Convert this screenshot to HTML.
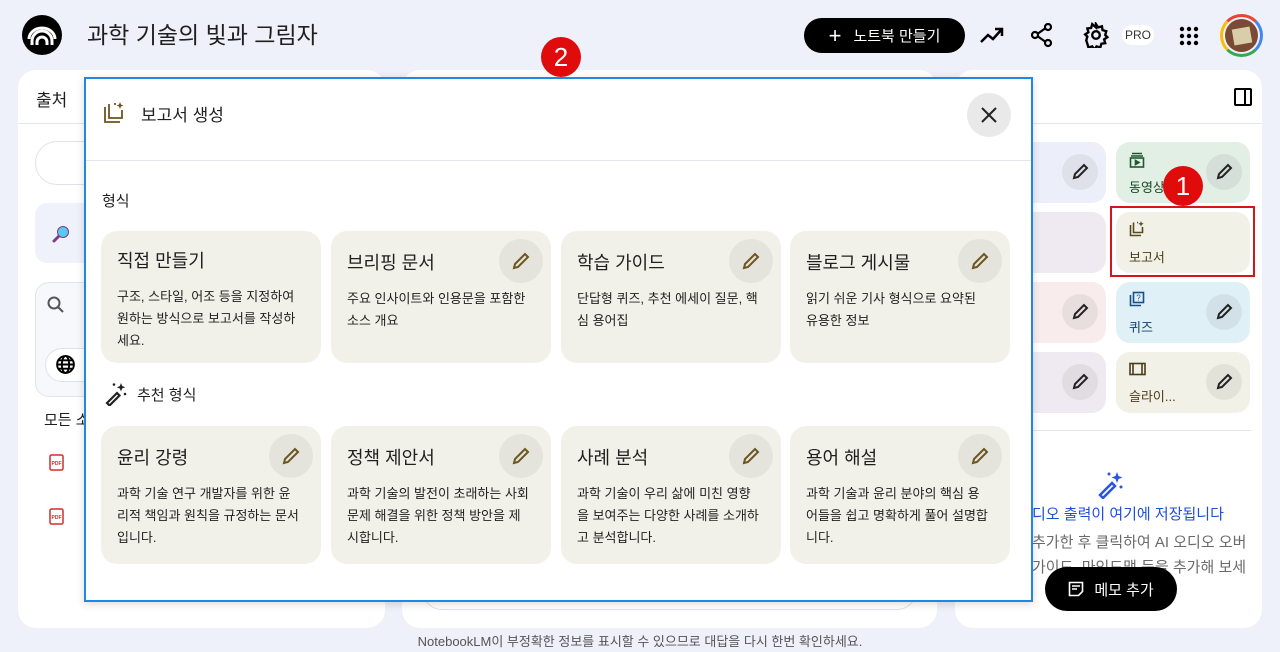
<!DOCTYPE html>
<html><head><meta charset="utf-8"><style>
*{box-sizing:border-box;margin:0;padding:0}
body{width:1280px;height:652px;overflow:hidden;background:#eef0fa;font-family:"Liberation Sans","Noto Sans CJK KR",sans-serif;color:#1f1f1f;position:relative}
.abs{position:absolute}
.panel{position:absolute;background:#fff;border-radius:18px}
.modal{position:absolute;left:84px;top:77px;width:949px;height:525px;background:#fff;border:2px solid #1e88e5;box-shadow:0 2px 8px rgba(0,0,0,.15)}
.card{position:absolute;width:220px;background:#f2f1e9;border-radius:16px;padding:16px 20px 16px 16px}
.card h3{font-size:18px;font-weight:400;margin-top:0;color:#1f1f1f}
.card p{font-size:13px;line-height:22px;margin-top:13px;color:#1f1f1f}
.pen{position:absolute;right:8px;top:8px;width:44px;height:44px;border-radius:50%;background:#e4e4dc;display:flex;align-items:center;justify-content:center}
.rc{position:absolute;width:134px;height:61px;border-radius:14px}
.rpen{position:absolute;right:8px;top:12px;width:36px;height:36px;border-radius:50%;background:rgba(0,0,0,.06);display:flex;align-items:center;justify-content:center}
.badge{position:absolute;width:40px;height:40px;border-radius:50%;background:#e00b0b;color:#fff;font-size:26px;display:flex;align-items:center;justify-content:center}
</style></head><body>
<!-- header -->
<div class="abs" style="left:22px;top:15px;width:40px;height:40px;border-radius:50%;background:#000">
<svg width="40" height="40" viewBox="0 0 40 40" fill="none" stroke="#fff" stroke-width="3"><path d="M10 30v-4a10 10 0 0 1 20 0v4"/><path d="M15 30v-3a5 5 0 0 1 10 0v3"/><path d="M7 24a13 11 0 0 1 26 0"/></svg></div>
<div class="abs" style="left:87px;top:16px;font-size:23px">과학 기술의 빛과 그림자</div>
<div class="abs" style="left:804px;top:18px;width:161px;height:35px;border-radius:18px;background:#000;color:#fff;font-size:15px;display:flex;align-items:center;justify-content:center;gap:12px"><span style="font-size:22px;line-height:1">+</span>노트북 만들기</div>
<svg class="abs" style="left:979px;top:24px" width="26" height="22" viewBox="0 0 26 22" fill="none" stroke="#000" stroke-width="2.5"><path d="M2 18l7-7 5 4 9-10M16 5h7v7"/></svg>
<svg class="abs" style="left:1030px;top:22px" width="24" height="26" viewBox="0 0 24 26" fill="none" stroke="#000" stroke-width="2.2"><circle cx="18" cy="5" r="3"/><circle cx="5" cy="13" r="3"/><circle cx="18" cy="21" r="3"/><path d="M8 11.5l7-5M8 14.5l7 5"/></svg>
<svg class="abs" style="left:1083px;top:22px" width="26" height="26" viewBox="0 0 24 24" fill="none" stroke="#000" stroke-width="2.2"><circle cx="12" cy="12" r="3.5"/><path d="M12 2l2 3 3.5-1 .5 3.5 3.5 1-1 3.5 2 2-3 2 1 3.5-3.5.5-1 3.5-3.5-1-2 3-2-3-3.5 1-1-3.5L3 17l1-3.5-2-2 3-2-1-3.5 3.5-.5 1-3.5L12 5z"/></svg>
<div class="abs" style="left:1122px;top:25px;width:32px;height:20px;border-radius:10px;background:#fff;font-size:12px;display:flex;align-items:center;justify-content:center;color:#333">PRO</div>
<svg class="abs" style="left:1179px;top:26px" width="20" height="20" viewBox="0 0 20 20" fill="#000"><circle cx="3" cy="3" r="2.2"/><circle cx="10" cy="3" r="2.2"/><circle cx="17" cy="3" r="2.2"/><circle cx="3" cy="10" r="2.2"/><circle cx="10" cy="10" r="2.2"/><circle cx="17" cy="10" r="2.2"/><circle cx="3" cy="17" r="2.2"/><circle cx="10" cy="17" r="2.2"/><circle cx="17" cy="17" r="2.2"/></svg>
<div class="abs" style="left:1220px;top:14px;width:43px;height:43px;border-radius:50%;border:3px solid;border-color:#ea4335 #4285f4 #34a853 #fbbc05;padding:2px"><div style="width:100%;height:100%;border-radius:50%;background:#7a4a34;display:flex;align-items:center;justify-content:center"><div style="width:18px;height:16px;background:#d8ceaa;transform:rotate(-10deg)"></div></div></div>

<!-- panels -->
<div class="panel" style="left:18px;top:70px;width:367px;height:558px">
<div class="abs" style="left:18px;top:16px;font-size:17px">출처</div>
<div class="abs" style="left:0;top:53px;width:367px;height:1px;background:#e3e6ee"></div>
<div class="abs" style="left:17px;top:71px;width:350px;height:44px;border:1px solid #dfe2ea;border-radius:22px"></div>
<div class="abs" style="left:17px;top:133px;width:350px;height:60px;background:#eff1fb;border-radius:12px"></div>
<svg class="abs" style="left:34px;top:155px" width="18" height="18" viewBox="0 0 18 18"><path d="M2 16l5-5" stroke="#7b3e8a" stroke-width="3" stroke-linecap="round"/><circle cx="11" cy="7" r="5.5" fill="#5bc8ef" stroke="#7b3e8a" stroke-width="1"/></svg>
<div class="abs" style="left:17px;top:212px;width:350px;height:115px;background:#f7f8fb;border:1px solid #e1e4ec;border-radius:14px"></div>
<svg class="abs" style="left:28px;top:225px" width="20" height="20" viewBox="0 0 20 20" fill="none" stroke="#555" stroke-width="2"><circle cx="8" cy="8" r="5.5"/><path d="M12 12l5 5"/></svg>
<div class="abs" style="left:27px;top:278px;width:340px;height:34px;border:1px solid #dfe2ea;border-radius:17px;background:#fff"></div>
<svg class="abs" style="left:37px;top:284px" width="21" height="21" viewBox="0 0 20 20" fill="none" stroke="#000" stroke-width="1.8"><circle cx="10" cy="10" r="8"/><ellipse cx="10" cy="10" rx="3.5" ry="8"/><path d="M2 10h16M3.5 6h13M3.5 14h13"/></svg>
<div class="abs" style="left:26px;top:339px;font-size:15px">모든 소스</div>
<svg class="abs" style="left:31px;top:384px" width="15" height="17"><rect x="1" y="1" width="13" height="15" rx="1.5" fill="#fff" stroke="#d32f2f" stroke-width="1.5"/><text x="7.5" y="11" font-size="5" fill="#d32f2f" text-anchor="middle" font-family="Liberation Sans" font-weight="bold">PDF</text></svg>
<svg class="abs" style="left:31px;top:438px" width="15" height="17"><rect x="1" y="1" width="13" height="15" rx="1.5" fill="#fff" stroke="#d32f2f" stroke-width="1.5"/><text x="7.5" y="11" font-size="5" fill="#d32f2f" text-anchor="middle" font-family="Liberation Sans" font-weight="bold">PDF</text></svg>
</div>
<div class="panel" style="left:402px;top:70px;width:535px;height:558px">
<div class="abs" style="left:20px;top:490px;width:495px;height:50px;border:1px solid #dfe2ea;border-radius:20px"></div>
</div>
<div class="panel" style="left:955px;top:70px;width:307px;height:558px">
<svg class="abs" style="left:279px;top:18px" width="18" height="18" viewBox="0 0 18 18" fill="none" stroke="#000" stroke-width="2"><rect x="1" y="1" width="16" height="16" rx="1"/><path d="M11 1v16"/></svg>
<div class="abs" style="left:0;top:53px;width:307px;height:1px;background:#e3e6ee"></div>
<div class="abs" style="left:20px;top:360px;width:276px;height:1px;background:#e3e6ee"></div>
</div>
<!-- right cards -->
<div class="rc" style="left:972px;top:142px;background:#eceef9"><div class="rpen"><svg width="18" height="18" viewBox="0 0 18 18" fill="none" stroke="#222" stroke-width="2"><path d="M3 15l1-4L13 2l3 3-9 9z"/></svg></div></div>
<div class="rc" style="left:1116px;top:142px;background:#e2efe5"><svg class="abs" style="left:13px;top:10px" width="16" height="16" viewBox="0 0 16 16" fill="none" stroke="#1e5a2e" stroke-width="1.6"><path d="M3 1.5h10M2 4h12"/><rect x="1.5" y="6" width="13" height="9"/><path d="M6.5 8.5v4l3.5-2z" fill="#1e5a2e"/></svg><div class="abs" style="left:13px;top:35px;font-size:13px;color:#174a25">동영상</div><div class="rpen"><svg width="18" height="18" viewBox="0 0 18 18" fill="none" stroke="#222" stroke-width="2"><path d="M3 15l1-4L13 2l3 3-9 9z"/></svg></div></div>
<div class="rc" style="left:972px;top:212px;background:#efe9f1"></div>
<div class="abs" style="left:1110px;top:206px;width:145px;height:71px;border:2px solid #d8141a"></div>
<div class="rc" style="left:1116px;top:212px;background:#f2f1e7"><svg class="abs" style="left:13px;top:9px" width="16" height="16" viewBox="0 0 16 16" fill="none" stroke="#5a4a20" stroke-width="1.6"><path d="M1.5 4v10.5H12M4.5 1.5v10h9V6M8 1.5h1"/><path d="M12 0l.8 2 2 .8-2 .8-.8 2-.8-2-2-.8 2-.8z" fill="#5a4a20" stroke="none"/></svg><div class="abs" style="left:13px;top:35px;font-size:13px;color:#4a3d1a">보고서</div></div>
<div class="rc" style="left:972px;top:282px;background:#f8ecec"><div class="rpen"><svg width="18" height="18" viewBox="0 0 18 18" fill="none" stroke="#222" stroke-width="2"><path d="M3 15l1-4L13 2l3 3-9 9z"/></svg></div></div>
<div class="rc" style="left:1116px;top:282px;background:#dff0f6"><svg class="abs" style="left:13px;top:9px" width="16" height="16" viewBox="0 0 16 16" fill="none" stroke="#1a4e8a" stroke-width="1.6"><path d="M1.5 4v10.5H12"/><rect x="4.5" y="1.5" width="10" height="10"/><text x="9.5" y="9.5" font-size="8" text-anchor="middle" fill="#1a4e8a" stroke="none" font-family="Liberation Sans">?</text></svg><div class="abs" style="left:13px;top:35px;font-size:13px;color:#123e70">퀴즈</div><div class="rpen"><svg width="18" height="18" viewBox="0 0 18 18" fill="none" stroke="#222" stroke-width="2"><path d="M3 15l1-4L13 2l3 3-9 9z"/></svg></div></div>
<div class="rc" style="left:972px;top:352px;background:#efeaf1"><div class="rpen"><svg width="18" height="18" viewBox="0 0 18 18" fill="none" stroke="#222" stroke-width="2"><path d="M3 15l1-4L13 2l3 3-9 9z"/></svg></div></div>
<div class="rc" style="left:1116px;top:352px;background:#f2f1e7"><svg class="abs" style="left:13px;top:10px" width="17" height="14" viewBox="0 0 17 14" fill="none" stroke="#4a3d1a" stroke-width="1.6"><rect x="1" y="1.5" width="15" height="11"/><path d="M4 1.5v11M13 1.5v11"/></svg><div class="abs" style="left:13px;top:34px;font-size:13px;color:#4a3d1a">슬라이...</div><div class="rpen"><svg width="18" height="18" viewBox="0 0 18 18" fill="none" stroke="#222" stroke-width="2"><path d="M3 15l1-4L13 2l3 3-9 9z"/></svg></div></div>
<div class="badge" style="left:1163px;top:166px">1</div>
<svg class="abs" style="left:1097px;top:471px" width="28" height="28" viewBox="0 0 28 28" fill="#2b55e0"><path d="M3 24l12-12 3 3L6 27z" fill="none" stroke="#2b55e0" stroke-width="2.5"/><path d="M20 1l1.5 4 4 1.5-4 1.5-1.5 4-1.5-4-4-1.5 4-1.5z"/><circle cx="24" cy="16" r="1.5"/><circle cx="12" cy="3" r="1.5"/></svg>
<div class="abs" style="left:1032px;top:503px;font-size:15px;color:#1f4fd8;white-space:nowrap">디오 출력이 여기에 저장됩니다</div>
<div class="abs" style="left:1032px;top:530px;font-size:15px;color:#6a6a6a;white-space:nowrap;line-height:25px">추가한 후 클릭하여 AI 오디오 오버<br>가이드, 마인드맵 등을 추가해 보세</div>
<div class="abs" style="left:1045px;top:567px;width:132px;height:44px;border-radius:22px;background:#000;color:#fff;font-size:15px;display:flex;align-items:center;justify-content:center;gap:10px"><svg width="16" height="16" viewBox="0 0 16 16" fill="none" stroke="#fff" stroke-width="1.6"><path d="M1.5 1.5h13v9l-4 4h-9z M4 5h8M4 8h5"/></svg>메모 추가</div>
<div class="abs" style="left:0;top:631px;width:1280px;text-align:center;font-size:13px;color:#555">NotebookLM이 부정확한 정보를 표시할 수 있으므로 대답을 다시 한번 확인하세요.</div>

<!-- modal -->
<div class="modal">
<svg class="abs" style="left:17px;top:23px" width="22" height="22" viewBox="0 0 22 22" fill="none" stroke="#6b5620" stroke-width="1.8"><path d="M2 5v15h15M6 2v14h13V8M11 2h2"/><path d="M17 0l1 2.5 2.5 1-2.5 1-1 2.5-1-2.5-2.5-1 2.5-1z" fill="#6b5620" stroke="none"/></svg>
<div class="abs" style="left:55px;top:22px;font-size:17px">보고서 생성</div>
<div class="abs" style="left:881px;top:14px;width:44px;height:44px;border-radius:50%;background:#e9e9e9;display:flex;align-items:center;justify-content:center"><svg width="18" height="18" viewBox="0 0 18 18" stroke="#222" stroke-width="2"><path d="M2 2l14 14M16 2L2 16"/></svg></div>
<div class="abs" style="left:0;top:81px;width:945px;height:1px;background:#e3e6ee"></div>
<div class="abs" style="left:16px;top:111px;font-size:15px">형식</div>
<svg class="abs" style="left:18px;top:303px" width="24" height="24" viewBox="0 0 24 24" fill="#222"><path d="M3 21l10-10 2.5 2.5L5.5 23.5z" fill="none" stroke="#222" stroke-width="2.2"/><path d="M17 1l1.2 3 3 1.2-3 1.2L17 9.5l-1.2-3-3-1.2 3-1.2z"/><circle cx="21" cy="12" r="1.3"/><circle cx="10" cy="2.5" r="1.3"/></svg>
<div class="abs" style="left:51px;top:305px;font-size:15px">추천 형식</div>
</div>
<div class="card" style="left:101px;top:231px;height:132px"><h3>직접 만들기</h3><p>구조, 스타일, 어조 등을 지정하여 원하는 방식으로 보고서를 작성하세요.</p></div>
<div class="card" style="left:331px;top:231px;height:132px"><h3 style="margin-top:2px">브리핑 문서</h3><p>주요 인사이트와 인용문을 포함한 소스 개요</p><div class="pen"><svg width="20" height="20" viewBox="0 0 20 20" fill="none" stroke="#6b5620" stroke-width="2"><path d="M3 17l1-4L14 3l3 3L7 16z"/></svg></div></div>
<div class="card" style="left:561px;top:231px;height:132px"><h3 style="margin-top:2px">학습 가이드</h3><p>단답형 퀴즈, 추천 에세이 질문, 핵심 용어집</p><div class="pen"><svg width="20" height="20" viewBox="0 0 20 20" fill="none" stroke="#6b5620" stroke-width="2"><path d="M3 17l1-4L14 3l3 3L7 16z"/></svg></div></div>
<div class="card" style="left:790px;top:231px;height:132px"><h3 style="margin-top:2px">블로그 게시물</h3><p style="padding-right:8px">읽기 쉬운 기사 형식으로 요약된 유용한 정보</p><div class="pen"><svg width="20" height="20" viewBox="0 0 20 20" fill="none" stroke="#6b5620" stroke-width="2"><path d="M3 17l1-4L14 3l3 3L7 16z"/></svg></div></div>
<div class="card" style="left:101px;top:426px;height:138px"><h3 style="margin-top:2px">윤리 강령</h3><p>과학 기술 연구 개발자를 위한 윤리적 책임과 원칙을 규정하는 문서입니다.</p><div class="pen"><svg width="20" height="20" viewBox="0 0 20 20" fill="none" stroke="#6b5620" stroke-width="2"><path d="M3 17l1-4L14 3l3 3L7 16z"/></svg></div></div>
<div class="card" style="left:331px;top:426px;height:138px"><h3 style="margin-top:2px">정책 제안서</h3><p>과학 기술의 발전이 초래하는 사회 문제 해결을 위한 정책 방안을 제시합니다.</p><div class="pen"><svg width="20" height="20" viewBox="0 0 20 20" fill="none" stroke="#6b5620" stroke-width="2"><path d="M3 17l1-4L14 3l3 3L7 16z"/></svg></div></div>
<div class="card" style="left:561px;top:426px;height:138px"><h3 style="margin-top:2px">사례 분석</h3><p>과학 기술이 우리 삶에 미친 영향을 보여주는 다양한 사례를 소개하고 분석합니다.</p><div class="pen"><svg width="20" height="20" viewBox="0 0 20 20" fill="none" stroke="#6b5620" stroke-width="2"><path d="M3 17l1-4L14 3l3 3L7 16z"/></svg></div></div>
<div class="card" style="left:790px;top:426px;height:138px"><h3 style="margin-top:2px">용어 해설</h3><p>과학 기술과 윤리 분야의 핵심 용어들을 쉽고 명확하게 풀어 설명합니다.</p><div class="pen"><svg width="20" height="20" viewBox="0 0 20 20" fill="none" stroke="#6b5620" stroke-width="2"><path d="M3 17l1-4L14 3l3 3L7 16z"/></svg></div></div>
<div class="badge" style="left:541px;top:37px">2</div>
</body></html>
